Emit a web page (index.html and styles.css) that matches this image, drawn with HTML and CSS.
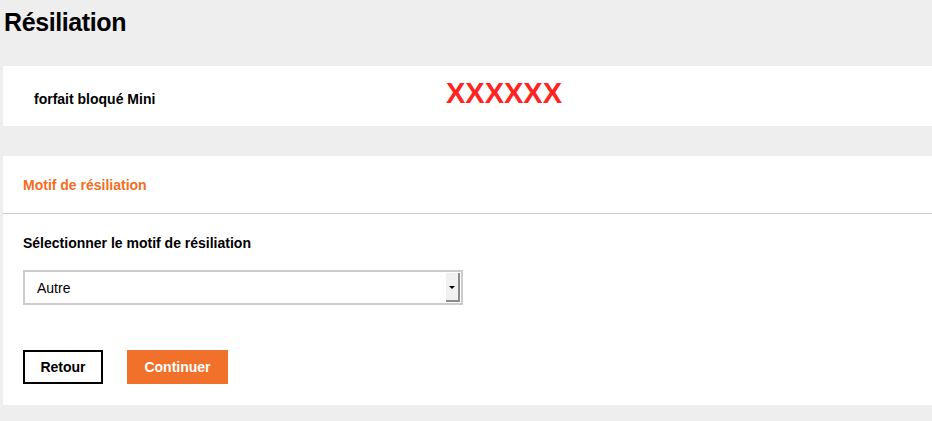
FILE: index.html
```html
<!doctype html>
<html lang="fr">
	<head>
		<meta charset="UTF-8" />
		<title>Résiliation</title>
		<link rel="stylesheet" href="styles.css">
	</head>
	<body>
		<h1>Résiliation</h1>

		<div class="card offer">
			<span class="offer-name">forfait bloqué Mini</span>
			<span class="offer-number">XXXXXX</span>
		</div>

		<div class="card reason">
			<div class="reason-head">Motif de résiliation</div>
			<div class="reason-body">
				<label class="field-label">Sélectionner le motif de résiliation</label>
				<div class="select">
					<span class="select-value">Autre</span>
					<span class="select-arrow"></span>
				</div>
				<div class="actions">
					<button class="btn btn-back">Retour</button>
					<button class="btn btn-next">Continuer</button>
				</div>
			</div>
		</div>
	</body>
</html>
```
FILE: styles.css
```css
body {
	margin: 0;
	background: #eeeeee;
	font-family: 'Liberation Sans', Arial, sans-serif;
	color: #000;
}
h1 {
	margin: 0;
	padding: 6px 4px 0;
	height: 66px;
	box-sizing: border-box;
	font-size: 25px;
	line-height: 32px;
	font-weight: bold;
	letter-spacing: -0.4px;
}
.card {
	margin-left: 3px;
	background: #fff;
}
.offer {
	height: 60px;
	display: flex;
	align-items: center;
	padding-left: 31px;
	margin-bottom: 30px;
}
.offer-name {
	font-size: 14px;
	font-weight: bold;
	width: 412px;
	padding-top: 5px;
}
.offer-number {
	color: #ff2424;
	font-size: 29px;
	font-weight: bold;
	padding-bottom: 6px;
}
.reason-head {
	height: 58px;
	box-sizing: border-box;
	padding: 21px 0 0 20px;
	color: #f26e22;
	font-size: 14px;
	font-weight: bold;
	border-bottom: 1px solid #cccccc;
}
.reason-body {
	padding: 21px 20px 21px;
}
.field-label {
	display: block;
	font-size: 14px;
	font-weight: bold;
	line-height: 16px;
}
.select {
	margin-top: 19px;
	width: 440px;
	height: 35px;
	box-sizing: border-box;
	border: 2px solid #cccccc;
	display: flex;
	align-items: center;
	justify-content: space-between;
}
.select-value {
	font-size: 14px;
	padding-left: 12px;
	padding-top: 1px;
}
.select-arrow {
	position: relative;
	width: 14px;
	height: 29px;
	margin-right: 1px;
	background: #f1f1f1;
	border-right: 2px solid #8a8a8a;
	border-bottom: 2px solid #8a8a8a;
	box-sizing: border-box;
}
.select-arrow::after {
	content: '';
	position: absolute;
	left: 3px;
	top: 13px;
	border-left: 3px solid transparent;
	border-right: 3px solid transparent;
	border-top: 3px solid #000;
}
.actions {
	margin-top: 45px;
	display: flex;
	gap: 24px;
}
.btn {
	height: 34px;
	font-family: inherit;
	font-size: 14px;
	font-weight: bold;
	padding: 0;
	cursor: pointer;
}
.btn-back {
	width: 80px;
	background: #fff;
	border: 2px solid #000;
	color: #000;
}
.btn-next {
	width: 101px;
	background: #f1702a;
	border: 0;
	color: #fff;
}
```
